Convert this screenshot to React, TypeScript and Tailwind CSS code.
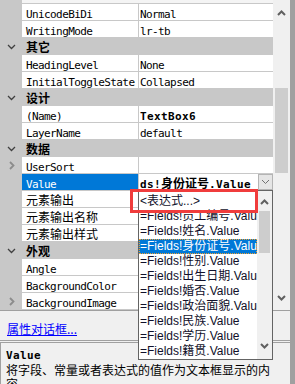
import React from "react";

const CJK_RE = /([\u2e80-\u9fff\u3000-\u303f\uff00-\uffef]+)/;

function Mixed({ text, bold }: { text: string; bold?: boolean }) {
  const parts = text.split(CJK_RE).filter(Boolean);
  return (
    <>
      {parts.map((p, i) =>
        CJK_RE.test(p) ? (
          <span
            key={i}
            className={
              bold
                ? "font-['Noto_Sans_CJK_SC',sans-serif] text-[12px] font-bold tracking-normal"
                : "font-['Noto_Sans_CJK_SC',sans-serif] text-[12px] tracking-normal"
            }
          >
            {p}
          </span>
        ) : (
          <span
            key={i}
            className={
              bold
                ? "font-['DejaVu_Sans_Mono',monospace] text-[11px] font-bold tracking-[0.38px]"
                : "font-['DejaVu_Sans_Mono',monospace] text-[11px] tracking-[-0.6px]"
            }
          >
            {p}
          </span>
        )
      )}
    </>
  );
}

type Row = {
  t: "c" | "p";
  n: string;
  v?: string;
  b?: boolean;
  e?: boolean;
  s?: boolean;
};

const rows: Row[] = [
  { t: "p", n: "UnicodeBiDi", v: "Normal" },
  { t: "p", n: "WritingMode", v: "lr-tb" },
  { t: "c", n: "其它" },
  { t: "p", n: "HeadingLevel", v: "None" },
  { t: "p", n: "InitialToggleState", v: "Collapsed" },
  { t: "c", n: "设计" },
  { t: "p", n: "(Name)", v: "TextBox6", b: true },
  { t: "p", n: "LayerName", v: "default" },
  { t: "c", n: "数据" },
  { t: "p", n: "UserSort", e: true },
  { t: "p", n: "Value", v: "ds!身份证号.Value", b: true, s: true },
  { t: "p", n: "元素输出" },
  { t: "p", n: "元素输出名称" },
  { t: "p", n: "元素输出样式" },
  { t: "c", n: "外观" },
  { t: "p", n: "Angle" },
  { t: "p", n: "BackgroundColor" },
  { t: "p", n: "BackgroundImage", e: true },
];

const items = [
  "<表达式...>",
  "=Fields!员工编号.Value",
  "=Fields!姓名.Value",
  "=Fields!身份证号.Value",
  "=Fields!性别.Value",
  "=Fields!出生日期.Value",
  "=Fields!婚否.Value",
  "=Fields!政治面貌.Value",
  "=Fields!民族.Value",
  "=Fields!学历.Value",
  "=Fields!籍贯.Value",
];

function ChevDown({ color = "#404040", w = 9, h = 6, sw = 1.3 }: { color?: string; w?: number; h?: number; sw?: number }) {
  return (
    <svg width={w} height={h} viewBox="0 0 9 6">
      <path d="M1 1 L4.5 4.5 L8 1" fill="none" stroke={color} strokeWidth={sw} />
    </svg>
  );
}

function ChevUp({ color = "#606060" }: { color?: string }) {
  return (
    <svg width={9} height={6} viewBox="0 0 9 6">
      <path d="M1 5 L4.5 1.5 L8 5" fill="none" stroke={color} strokeWidth={2} />
    </svg>
  );
}

function ChevRight() {
  return (
    <svg width={6} height={9} viewBox="0 0 6 9">
      <path d="M1 1 L4.5 4.5 L1 8" fill="none" stroke="#8c8c8c" strokeWidth={1.8} />
    </svg>
  );
}

function GridRow({ r }: { r: Row }) {
  if (r.t === "c") {
    return (
      <div className="flex h-[17px] bg-[#c8c8c8] items-center">
        <div className="w-[22px] flex justify-center items-center pl-[1px]">
          <ChevDown />
        </div>
        <div className="pl-[4px] leading-[16px] text-black">
          <span className="font-['Noto_Sans_CJK_SC',sans-serif] text-[12px] font-bold">{r.n}</span>
        </div>
      </div>
    );
  }
  return (
    <div className="flex h-[17px]">
      <div className="w-[22px] bg-[#c8c8c8] flex items-center justify-center pl-[2px]">
        {r.e ? <ChevRight /> : null}
      </div>
      <div className="flex flex-1 border-b border-[#c8c8c8] bg-white">
        <div
          className={
            r.s
              ? "w-[117px] border-r border-[#c8c8c8] bg-[#0078d7] text-white pl-[4px] leading-[16px] whitespace-nowrap overflow-hidden"
              : "w-[117px] border-r border-[#c8c8c8] text-black pl-[4px] leading-[16px] whitespace-nowrap overflow-hidden"
          }
        >
          <Mixed text={r.n} />
        </div>
        <div className="flex-1 flex min-w-0">
          <div className="flex-1 pl-[1px] leading-[16px] text-black whitespace-nowrap overflow-hidden">
            {r.v ? <Mixed text={r.v} bold={r.b} /> : null}
          </div>
          {r.s ? (
            <div className="w-[15px] h-[16px] bg-[#e5e5e5] border border-[#b4b4b4] flex items-center justify-center">
              <ChevDown color="#707070" w={9} h={6} sw={1} />
            </div>
          ) : null}
        </div>
      </div>
    </div>
  );
}

export default function App() {
  return (
    <div className="w-[295px] h-[384px] overflow-hidden relative bg-[#f0f0f0] flex">
      <div className="w-[290px] flex flex-col">
        <div className="flex h-[310px]">
          <div className="w-[273px] flex flex-col">
            <div className="flex h-[4px]">
              <div className="w-[22px] bg-[#c8c8c8]" />
              <div className="flex-1 bg-[#f4f4f4] border-b border-[#c8c8c8]" />
            </div>
            {rows.map((r, i) => (
              <GridRow key={i} r={r} />
            ))}
          </div>
          <div className="w-[17px] bg-[#f0f0f0] flex flex-col">
            <div className="h-[26px] flex items-center justify-center">
              <ChevUp />
            </div>
            <div className="h-[62px]" />
            <div className="h-[85px] mx-[2px] bg-[#cdcdcd]" />
            <div className="flex-1" />
            <div className="h-[24px] flex items-center justify-center">
              <ChevDown color="#606060" sw={2} />
            </div>
          </div>
        </div>
        <div className="h-[32px] border-t border-b border-[#a0a0a0] bg-[#f0f0f0] pl-[7px] pt-[5px]">
          <span className="font-['Noto_Sans_CJK_SC',sans-serif] text-[12px] leading-[16px] text-[#0000ff] underline">
            属性对话框...
          </span>
        </div>
        <div className="flex-1 mt-[1px] border-t border-l border-[#a0a0a0] bg-[#f0f0f0] pl-[5px] pt-[3px]">
          <div className="leading-[15px] text-black">
            <Mixed text="Value" bold />
          </div>
          <div className="font-['Noto_Sans_CJK_SC',sans-serif] text-[12px] leading-[14px] text-black w-[266px]">
            将字段、常量或者表达式的值作为文本框显示的内容。
          </div>
        </div>
      </div>
      <div className="w-[5px] bg-[#a0a0a0]" />

      {/* dropdown list */}
      <div className="absolute left-[138px] top-[190px] w-[135px] h-[170px] bg-white border border-[#646464] flex">
        <div className="flex-1 min-w-0 pt-[3px] overflow-hidden">
          {items.map((it, i) => (
            <div
              key={i}
              className={
                i === 3
                  ? "h-[15px] leading-[15px] pl-[1px] whitespace-nowrap overflow-hidden bg-[#0078d7] text-white outline-1 outline-dotted outline-[#f0a030] -outline-offset-1 font-['Liberation_Sans','Noto_Sans_CJK_SC',sans-serif] text-[12px]"
                  : "h-[15px] leading-[15px] pl-[1px] whitespace-nowrap overflow-hidden text-[#10102a] font-['Liberation_Sans','Noto_Sans_CJK_SC',sans-serif] text-[12px]"
              }
            >
              {it}
            </div>
          ))}
        </div>
        <div className="w-[15px] bg-[#f0f0f0] flex flex-col">
          <div className="h-[20px] flex items-end justify-center pb-[6px]">
            <ChevUp />
          </div>
          <div className="h-[42px] mx-[2px] bg-[#cdcdcd]" />
          <div className="flex-1" />
          <div className="h-[20px] flex items-start justify-center pt-[4px]">
            <ChevDown color="#606060" sw={2} />
          </div>
        </div>
      </div>

      {/* red annotation box */}
      <div className="absolute left-[130px] top-[189px] w-[128px] h-[24px] border-[3px] border-[#f03c3c]" />
    </div>
  );
}
